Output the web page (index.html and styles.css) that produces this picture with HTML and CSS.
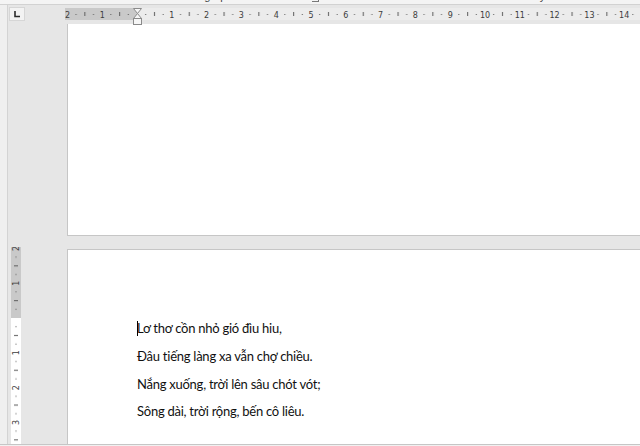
FILE: index.html
```html
<!DOCTYPE html>
<html lang="vi">
<head>
<meta charset="utf-8">
<title>Document</title>
<link rel="stylesheet" href="styles.css">
</head>
<body>
<div class="app">
  <div class="ribbon">
    <div class="ribbon-labels">
      <span class="lbl lbl-font">Font</span>
      <span class="launch launch-font"></span>
      <span class="lbl lbl-para">Paragraph</span>
      <span class="launch launch-para"></span>
      <span class="lbl lbl-styles">Styles</span>
    </div>
  </div>
  <div class="main">
    <div class="edge"></div>
    <div class="side">
      <div class="tabsel">
        <svg width="14" height="12" viewBox="0 0 14 12"><path d="M5 3v5.5h5" fill="none" stroke="#2b2b2b" stroke-width="1.6"/></svg>
      </div>
      <svg class="vruler" width="10" height="197" viewBox="0 0 10 197">
        <defs>
          <pattern id="vt" x="0" y="71" width="10" height="34.8" patternUnits="userSpaceOnUse">
            <rect x="4.5" y="8.2" width="1" height="1" fill="#5a5a5a"/>
            <rect x="3" y="17" width="4" height="1" fill="#5a5a5a"/>
            <rect x="4.5" y="25.6" width="1" height="1" fill="#5a5a5a"/>
          </pattern>
        </defs>
        <rect x="0" y="0" width="10" height="71" fill="#c9c9c9"/>
        <rect x="0" y="71" width="10" height="126" fill="#ffffff"/>
        <rect x="0" y="0" width="10" height="197" fill="url(#vt)"/>
        <g class="rnum" text-anchor="middle">
          <text transform="translate(5 1.4) rotate(-90)" dy="3">2</text>
          <text transform="translate(5 36.2) rotate(-90)" dy="3">1</text>
          <text transform="translate(5 105.8) rotate(-90)" dy="3">1</text>
          <text transform="translate(5 140.6) rotate(-90)" dy="3">2</text>
          <text transform="translate(5 175.4) rotate(-90)" dy="3">3</text>
        </g>
      </svg>
    </div>
    <div class="doc">
      <div class="hruler">
        <svg width="575" height="12" viewBox="0 0 575 12">
          <defs>
            <pattern id="ht" x="72" y="0" width="34.8" height="12" patternUnits="userSpaceOnUse">
              <rect x="8.2" y="6" width="1" height="1" fill="#5a5a5a"/>
              <rect x="17" y="4" width="1" height="4" fill="#5a5a5a"/>
              <rect x="25.6" y="6" width="1" height="1" fill="#5a5a5a"/>
            </pattern>
          </defs>
          <rect x="0" y="0" width="72" height="12" fill="#c9c9c9"/>
          <rect x="72" y="0" width="503" height="12" fill="#ececec"/>
          <rect x="0" y="0" width="575" height="12" fill="url(#ht)"/>
          <g class="rnum" text-anchor="middle">
            <text x="2.6" y="9.5">2</text>
            <text x="37.2" y="9.5">1</text>
            <text x="106.8" y="9.5">1</text>
            <text x="141.6" y="9.5">2</text>
            <text x="176.4" y="9.5">3</text>
            <text x="211.2" y="9.5">4</text>
            <text x="246" y="9.5">5</text>
            <text x="280.8" y="9.5">6</text>
            <text x="315.6" y="9.5">7</text>
            <text x="350.4" y="9.5">8</text>
            <text x="385.2" y="9.5">9</text>
            <text x="420" y="9.5">10</text>
            <text x="454.8" y="9.5">11</text>
            <text x="489.6" y="9.5">12</text>
            <text x="524.4" y="9.5">13</text>
            <text x="559.2" y="9.5">14</text>
          </g>
        </svg>
        <svg class="indent" width="9" height="18" viewBox="0 0 9 18">
          <polygon points="0.5,0.5 8.5,0.5 4.5,5.5" fill="#f6f6f6" stroke="#8a8a8a" stroke-width="1"/>
          <polygon points="4.5,5.5 8.5,10.5 0.5,10.5" fill="#f6f6f6" stroke="#8a8a8a" stroke-width="1"/>
          <rect x="0.5" y="10.5" width="8" height="6" fill="#f6f6f6" stroke="#8a8a8a" stroke-width="1"/>
        </svg>
      </div>
      <div class="page page-one"></div>
      <div class="page page-two">
        <p class="line"><span class="caret"></span>Lơ thơ cồn nhỏ gió đìu hiu,</p>
        <p class="line">Đâu tiếng làng xa vẫn chợ chiều.</p>
        <p class="line">Nắng xuống, trời lên sâu chót vót;</p>
        <p class="line">Sông dài, trời rộng, bến cô liêu.</p>
      </div>
    </div>
  </div>
  <div class="status"></div>
</div>
</body>
</html>
```

FILE: styles.css
```css
html, body {
  margin: 0;
  padding: 0;
}

body {
  width: 640px;
  height: 446px;
  overflow: hidden;
  background: #e6e6e6;
  font-family: "Liberation Sans", Arial, sans-serif;
}

.app {
  display: flex;
  flex-direction: column;
  height: 446px;
}

.ribbon {
  height: 4px;
  flex: none;
  background: #f4f4f4;
  border-bottom: 1px solid #d2d2d2;
  overflow: hidden;
}

.ribbon-labels {
  display: flex;
  align-items: flex-start;
  margin-top: -10px;
  font-size: 11px;
  line-height: 13px;
  color: #444;
  white-space: nowrap;
}

.lbl-font { margin-left: 84px; }
.launch {
  width: 7px;
  height: 7px;
  margin-top: 5px;
  border-right: 1px solid #777;
  border-bottom: 1px solid #777;
  box-sizing: border-box;
}
.launch-font { margin-left: 40px; visibility: hidden; }
.lbl-para { margin-left: 28px; }
.launch-para { margin-left: 80px; }
.lbl-styles { margin-left: 210px; }

.main {
  flex: 1;
  display: flex;
  min-height: 0;
}

.edge {
  width: 7px;
  flex: none;
  background: #efefef;
  border-right: 1px solid #d3d3d3;
}

.side {
  width: 57px;
  flex: none;
  display: flex;
  flex-direction: column;
  align-items: flex-start;
}

.tabsel {
  margin-top: 2px;
  margin-left: 1px;
  width: 14px;
  height: 12px;
  background: #f3f3f3;
  border: 1px solid #d6d6d6;
  display: flex;
}

.vruler {
  display: block;
  margin-top: auto;
  margin-left: 3px;
}

.rnum {
  font-family: "DejaVu Sans", "Liberation Sans", sans-serif;
  font-size: 8px;
  fill: #3c3c3c;
}

.doc {
  flex: 1;
  min-width: 0;
  display: flex;
  flex-direction: column;
}

.hruler {
  position: relative;
  height: 12px;
  margin-top: 3px;
  flex: none;
}

.hruler > svg {
  display: block;
}

.hruler .indent {
  position: absolute;
  left: 67.5px;
  top: 0;
}

.page {
  background: #ffffff;
  margin-left: 2px;
  border-left: 1px solid #c6c6c6;
}

.page-one {
  flex: none;
  height: 211px;
  margin-top: 4px;
  border-bottom: 1px solid #c6c6c6;
}

.page-two {
  flex: 1;
  margin-top: 13px;
  border-top: 1px solid #c6c6c6;
  padding: 69px 0 0 69px;
  font-family: Lato, "Open Sans", sans-serif;
  font-size: 13px;
  letter-spacing: -0.25px;
  color: #111;
}

.line {
  margin: 0 0 9.8px 0;
  line-height: 18px;
  white-space: nowrap;
}

.caret {
  display: inline-block;
  width: 1px;
  height: 15px;
  margin-right: -1px;
  background: #000;
  vertical-align: -3px;
}

.status {
  flex: none;
  height: 1px;
  background: #f1f1f1;
  border-top: 1px solid #c6c6c6;
}
```
